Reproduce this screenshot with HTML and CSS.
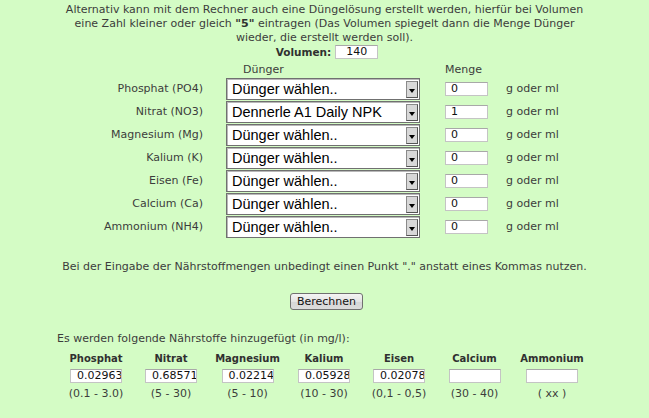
FILE: index.html
```html
<!DOCTYPE html>
<html lang="de">
<head>
<meta charset="utf-8">
<title>Dünger-Rechner</title>
<link rel="stylesheet" href="styles.css">
</head>
<body>
<p class="intro">Alternativ kann mit dem Rechner auch eine Düngelösung erstellt werden, hierfür bei Volumen<br>eine Zahl kleiner oder gleich <b>"5"</b> eintragen (Das Volumen spiegelt dann die Menge Dünger<br>wieder, die erstellt werden soll).</p>
<div class="volumen"><b class="vlabel">Volumen:</b><span class="input vol">140</span></div>
<div class="form">
  <div class="head"></div>
  <div class="head duenger">Dünger</div>
  <div class="head">Menge</div>
  <div class="head"></div>

  <div class="label">Phosphat (PO4)</div>
  <div class="select"><span>Dünger wählen..</span><i class="arrow"></i></div>
  <div class="cell"><span class="input menge">0</span></div>
  <div class="unit">g oder ml</div>

  <div class="label">Nitrat (NO3)</div>
  <div class="select"><span>Dennerle A1 Daily NPK</span><i class="arrow"></i></div>
  <div class="cell"><span class="input menge">1</span></div>
  <div class="unit">g oder ml</div>

  <div class="label">Magnesium (Mg)</div>
  <div class="select"><span>Dünger wählen..</span><i class="arrow"></i></div>
  <div class="cell"><span class="input menge">0</span></div>
  <div class="unit">g oder ml</div>

  <div class="label">Kalium (K)</div>
  <div class="select"><span>Dünger wählen..</span><i class="arrow"></i></div>
  <div class="cell"><span class="input menge">0</span></div>
  <div class="unit">g oder ml</div>

  <div class="label">Eisen (Fe)</div>
  <div class="select"><span>Dünger wählen..</span><i class="arrow"></i></div>
  <div class="cell"><span class="input menge">0</span></div>
  <div class="unit">g oder ml</div>

  <div class="label">Calcium (Ca)</div>
  <div class="select"><span>Dünger wählen..</span><i class="arrow"></i></div>
  <div class="cell"><span class="input menge">0</span></div>
  <div class="unit">g oder ml</div>

  <div class="label">Ammonium (NH4)</div>
  <div class="select"><span>Dünger wählen..</span><i class="arrow"></i></div>
  <div class="cell"><span class="input menge">0</span></div>
  <div class="unit">g oder ml</div>
</div>
<p class="note">Bei der Eingabe der Nährstoffmengen unbedingt einen Punkt "." anstatt eines Kommas nutzen.</p>
<div class="btnrow"><span class="button">Berechnen</span></div>
<p class="result-title">Es werden folgende Nährstoffe hinzugefügt (in mg/l):</p>
<div class="results">
  <div class="rh">Phosphat</div>
  <div class="rh">Nitrat</div>
  <div class="rh">Magnesium</div>
  <div class="rh">Kalium</div>
  <div class="rh">Eisen</div>
  <div class="rh">Calcium</div>
  <div class="rh">Ammonium</div>

  <div class="rc"><span class="input out">0.02963</span></div>
  <div class="rc"><span class="input out">0.68571</span></div>
  <div class="rc"><span class="input out">0.02214</span></div>
  <div class="rc"><span class="input out">0.05928</span></div>
  <div class="rc"><span class="input out">0.02078</span></div>
  <div class="rc"><span class="input out"></span></div>
  <div class="rc"><span class="input out"></span></div>

  <div class="rr">(0.1 - 3.0)</div>
  <div class="rr">(5 - 30)</div>
  <div class="rr">(5 - 10)</div>
  <div class="rr">(10 - 30)</div>
  <div class="rr">(0,1 - 0,5)</div>
  <div class="rr">(30 - 40)</div>
  <div class="rr">( xx )</div>
</div>
</body>
</html>
```
FILE: styles.css
```css
html, body {
  margin: 0;
  padding: 0;
  background: #d4fcc5;
}
body {
  font-family: "DejaVu Sans", Verdana, sans-serif;
  font-size: 11px;
  line-height: 14px;
  color: #3c3c3c;
  width: 649px;
  height: 418px;
  overflow: hidden;
}
p { margin: 0; }
b { color: #303030; }

.intro {
  padding-top: 3px;
  text-align: center;
}

.volumen {
  display: flex;
  justify-content: center;
  align-items: center;
  gap: 4px;
  height: 14px;
  padding-left: 5px;
}
.vlabel { font-size: 10.5px; }

.input {
  display: inline-block;
  box-sizing: border-box;
  background: #fff;
  border: 1px solid #c4c4c4;
  border-top-color: #a8a8a8;
  height: 14px;
  line-height: 12px;
  font-size: 11px;
  color: #111;
  white-space: nowrap;
  overflow: hidden;
}
.vol { width: 43px; padding-left: 10px; }
.menge { width: 43px; padding-left: 5px; }

.form {
  display: grid;
  grid-template-columns: 226px 219px 61px auto;
  grid-template-rows: 18px repeat(7, 22px);
  row-gap: 1px;
}
.head {
  align-self: end;
  line-height: 14px;
}
.duenger { padding-left: 17px; }
.label {
  text-align: right;
  padding-right: 23px;
  align-self: center;
}
.select {
  box-sizing: border-box;
  width: 194px;
  height: 22px;
  border: 1px solid #707070;
  box-shadow: inset 1px 1px 0 #b8b8b8;
  background: #fff;
  display: flex;
  align-items: center;
  justify-content: space-between;
  padding: 0 1px 0 5px;
  font-family: "Liberation Sans", Arial, sans-serif;
  font-size: 14.5px;
  color: #000;
}
.arrow {
  position: relative;
  box-sizing: border-box;
  width: 12px;
  height: 17px;
  background: #d8d8d8;
  border: 1px solid #8a8a8a;
  border-right-color: #555;
  border-bottom-color: #555;
}
.arrow::after {
  content: "";
  position: absolute;
  left: 2px;
  top: 7px;
  border-left: 3px solid transparent;
  border-right: 3px solid transparent;
  border-top: 4px solid #000;
}
.cell { align-self: center; display: flex; }
.unit { align-self: center; }

.note {
  margin-top: 22px;
  text-align: center;
}

.btnrow {
  margin-top: 19px;
  display: flex;
  justify-content: center;
  padding-left: 4px;
}
.button {
  box-sizing: border-box;
  width: 73px;
  height: 17px;
  border: 1px solid #707070;
  border-radius: 3px;
  background: linear-gradient(#f4f4f4, #e4e4e4 50%, #d6d6d6 51%, #dcdcdc);
  font-size: 11px;
  line-height: 15px;
  text-align: center;
  color: #111;
}

.result-title {
  margin-top: 22px;
  padding-left: 57px;
}

.results {
  display: grid;
  grid-template-columns: 74px 76px 77px 76px 74px 77px 78px;
  margin-left: 59px;
  margin-top: 6px;
}
.rh {
  text-align: center;
  font-weight: bold;
  font-size: 10px;
  color: #303030;
}
.rc {
  display: flex;
  justify-content: center;
  padding-top: 3px;
}
.out {
  width: 52px;
  padding-left: 6px;
}
.rr {
  text-align: center;
  margin-top: 4px;
}
```
